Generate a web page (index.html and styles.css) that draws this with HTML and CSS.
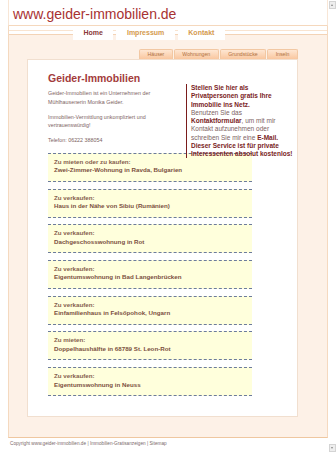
FILE: index.html
```html
<!DOCTYPE html>
<html lang="de">
<head>
    <meta charset="UTF-8">
    <meta name="viewport" content="width=device-width, initial-scale=1.0">
    <title>Geider-Immobilien</title>
    <link rel="stylesheet" href="styles.css">
</head>
<body>
    <div class="page">
        <div class="site">
            <div class="header">
                <span class="logo">www.geider-immobilien.de</span>
            </div>

            <div class="nav">
                <a class="tab active" href="#">Home</a>
                <a class="tab" href="#">Impressum</a>
                <a class="tab" href="#">Kontakt</a>
            </div>

            <div class="main">
                <div class="subnav">
                    <a href="#">Häuser</a>
                    <a href="#">Wohnungen</a>
                    <a href="#">Grundstücke</a>
                    <a href="#">Inseln</a>
                </div>

                <div class="content">
                    <div class="notice">
                        <b>Stellen Sie hier als<br>Privatpersonen gratis Ihre<br>Immobilie ins Netz.</b><br>
                        Benutzen Sie das<br>
                        <b>Kontaktformular</b>, um mit mir<br>
                        Kontakt aufzunehmen oder<br>
                        schreiben Sie mir eine <b>E-Mail.</b><br>
                        <b>Dieser Service ist für private<br>Interessenten absolut kostenlos!</b>
                    </div>

                    <h1>Geider-Immobilien</h1>
                    <p>Geider-Immobilien ist ein Unternehmen der Mühlhausenerin Monika Geider.</p>
                    <p>Immobilien-Vermittlung unkompliziert und vertrauenswürdig!</p>
                    <p>Telefon: 06222 388054</p>

                    <ul class="listings">
                        <li><span>Zu mieten oder zu kaufen:</span><a href="#">Zwei-Zimmer-Wohnung in Ravda, Bulgarien</a></li>
                        <li><span>Zu verkaufen:</span><a href="#">Haus in der Nähe von Sibiu (Rumänien)</a></li>
                        <li><span>Zu verkaufen:</span><a href="#">Dachgeschosswohnung in Rot</a></li>
                        <li><span>Zu verkaufen:</span><a href="#">Eigentumswohnung in Bad Langenbrücken</a></li>
                        <li><span>Zu verkaufen:</span><a href="#">Einfamilienhaus in Felsőpohok, Ungarn</a></li>
                        <li><span>Zu mieten:</span><a href="#">Doppelhaushälfte in 68789 St. Leon-Rot</a></li>
                        <li><span>Zu verkaufen:</span><a href="#">Eigentumswohnung in Neuss</a></li>
                    </ul>
                </div>
            </div>

            <div class="footer">
                Copyright www.geider-immobilien.de | Immobilien-Gratisanzeigen | Sitemap
            </div>
        </div>

        <div class="scrollbar">
            <span class="arrow up"></span>
            <span class="arrow down"></span>
        </div>
    </div>
</body>
</html>
```

FILE: styles.css
```css
body {
    margin: 0;
    font-family: "Liberation Sans", Arial, sans-serif;
    background-color: #fff;
    overflow: hidden;
}

a {
    text-decoration: none;
}

.page {
    display: flex;
    height: 453px;
}

.site {
    width: 320px;
    margin-left: 8px;
    flex: none;
}

/* header */

.header {
    height: 25px;
    border-left: 1px solid #f8e6d6;
    border-right: 1px solid #f8e6d6;
    border-bottom: 1px solid #f5d8bd;
}

.logo {
    display: block;
    padding: 7px 0 0 4px;
    font-size: 14px;
    line-height: 14px;
    color: #a83232;
}

.nav {
    display: flex;
    height: 14px;
    padding-left: 64px;
    border-left: 1px solid #f5d9bf;
    border-right: 1px solid #f5d9bf;
    background: linear-gradient(to bottom, #fff 0, #fff 4px, #f9e4d0 4px, #f9e4d0 5px, #fff 5px, #fff 8px, #f3d3b6 8px, #f3d3b6 9px, #fdf1e7 9px);
}

.tab {
    margin-right: 3px;
    padding: 0 10.5px;
    background-color: #fff;
    font-size: 7px;
    font-weight: bold;
    line-height: 13px;
    color: #d49a4e;
}

.tab.active {
    color: #8a3838;
}

/* main area */

.main {
    padding: 9px 29px 20px 18px;
    background-color: #fdf1e7;
    border-left: 1px solid #f5d9bf;
    border-right: 1px solid #f5d9bf;
    border-bottom: 1px solid #efc7a0;
}

.subnav {
    display: flex;
    justify-content: flex-end;
    height: 10px;
}

.subnav a {
    margin-left: 1px;
    padding: 0 7.5px;
    border: 1px solid #f2c8a3;
    border-bottom: none;
    border-radius: 2px 2px 0 0;
    background: linear-gradient(to bottom, #fee6d2, #f9c79f);
    font-size: 5.2px;
    line-height: 9px;
    color: #b0703e;
}

.content {
    padding: 12px 15px 20px 20px;
    background-color: #fff;
    border: 1px solid #f1dfcf;
}

.content h1 {
    margin: 0 0 5px;
    font-size: 10.5px;
    line-height: 12px;
    color: #a33b3b;
}

.content p {
    margin: 0 0 6.5px;
    font-size: 5.35px;
    line-height: 8.6px;
    color: #7d5f5f;
}

.notice {
    float: right;
    width: 91px;
    margin: 12px 0 -6px 10px;
    padding-left: 4px;
    border-left: 1px solid #7a1c1c;
    font-size: 6.5px;
    line-height: 8.25px;
    white-space: nowrap;
    color: #7d6262;
}

.notice b {
    color: #7a2424;
}

/* listings */

.listings {
    margin: 8px 0 0;
    padding: 0;
    list-style: none;
}

.listings li {
    box-sizing: border-box;
    width: 204px;
    height: 29px;
    margin-bottom: 6.7px;
    padding: 4px 6px 0;
    background-color: #ffffdc;
    border-top: 1px dashed #6c7b9c;
    border-bottom: 1px dashed #6c7b9c;
    font-size: 6.2px;
    font-weight: bold;
    line-height: 8.4px;
}

.listings li:last-child {
    margin-bottom: 0;
}

.listings span,
.listings a {
    display: block;
    color: #7b4f3e;
}

.listings span {
    color: #86604e;
}

.footer {
    padding: 2.5px 0 0 2px;
    font-size: 4.7px;
    line-height: 6px;
    color: #7a6a6a;
}

/* scrollbar */

.scrollbar {
    display: flex;
    flex-direction: column;
    justify-content: space-between;
    width: 6px;
    margin-left: auto;
    padding: 1px 1px 1px 0;
}

.arrow {
    width: 5px;
    height: 6px;
    background-color: #eeeeee;
    border: 1px solid #d4d4d4;
    position: relative;
}

.arrow::after {
    content: "";
    position: absolute;
    left: 1px;
    border-left: 1.5px solid transparent;
    border-right: 1.5px solid transparent;
}

.arrow.up::after {
    top: 2px;
    border-bottom: 2px solid #888;
}

.arrow.down::after {
    top: 2px;
    border-top: 2px solid #888;
}
```
